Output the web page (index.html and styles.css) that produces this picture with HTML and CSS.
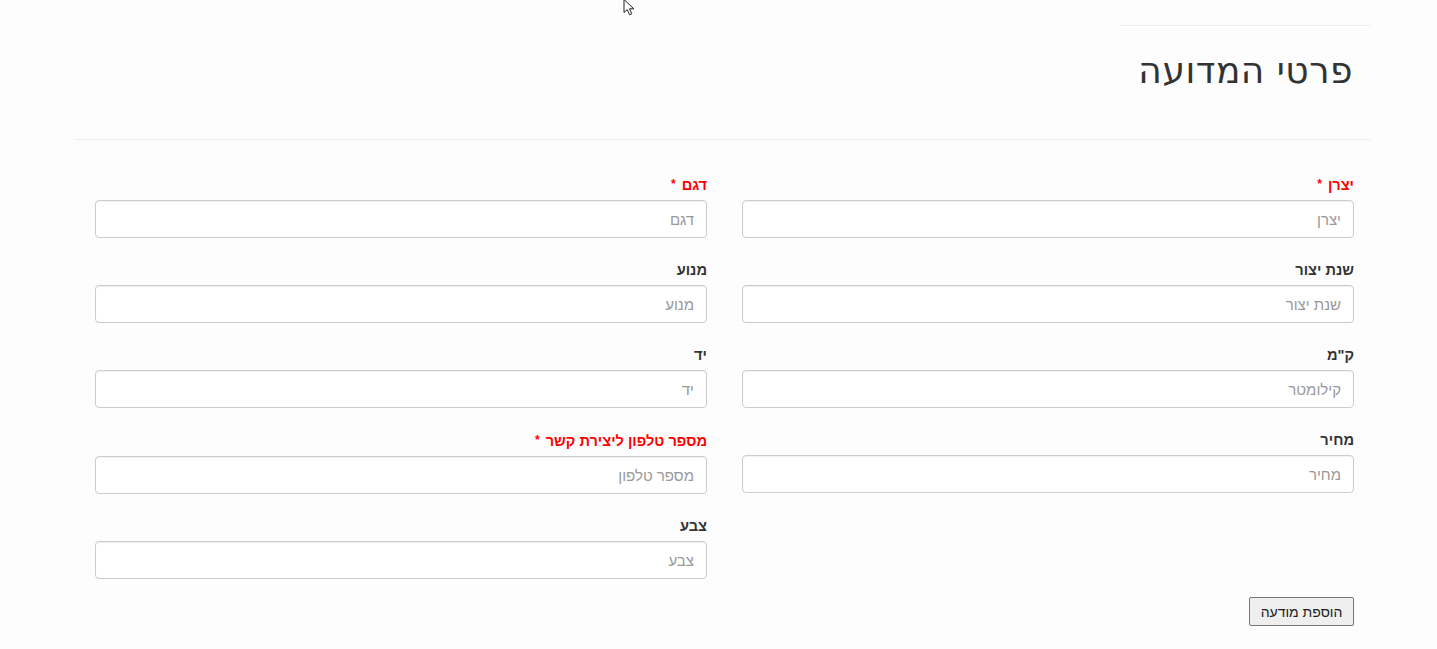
FILE: index.html
```html
<!DOCTYPE html>
<html lang="he" dir="rtl">
<head>
<meta charset="utf-8">
<title>פרטי המדועה</title>
<link rel="stylesheet" href="styles.css">
</head>
<body>
<div class="page">
  <div class="topline"></div>
  <h1 class="title">פרטי המדועה</h1>
  <div class="divider"></div>
  <form class="form">
    <div class="grid">
      <div class="group">
        <label class="label required">יצרן <span class="star">*</span></label>
        <input class="input" type="text" placeholder="יצרן">
      </div>
      <div class="group">
        <label class="label required">דגם <span class="star">*</span></label>
        <input class="input" type="text" placeholder="דגם">
      </div>
      <div class="group">
        <label class="label">שנת יצור</label>
        <input class="input" type="text" placeholder="שנת יצור">
      </div>
      <div class="group">
        <label class="label">מנוע</label>
        <input class="input" type="text" placeholder="מנוע">
      </div>
      <div class="group">
        <label class="label">ק"מ</label>
        <input class="input" type="text" placeholder="קילומטר">
      </div>
      <div class="group">
        <label class="label">יד</label>
        <input class="input" type="text" placeholder="יד">
      </div>
      <div class="group">
        <label class="label">מחיר</label>
        <input class="input" type="text" placeholder="מחיר">
      </div>
      <div class="group">
        <label class="label required">מספר טלפון ליצירת קשר <span class="star">*</span></label>
        <input class="input" type="text" placeholder="מספר טלפון">
      </div>
      <div class="group empty"></div>
      <div class="group">
        <label class="label">צבע</label>
        <input class="input" type="text" placeholder="צבע">
      </div>
    </div>
    <div class="actions">
      <button class="btn" type="button">הוספת מודעה</button>
    </div>
  </form>
</div>
<svg class="cursor" width="14" height="17" viewBox="0 0 14 17" aria-hidden="true">
  <path d="M1 0.5 L1 13.5 L4.2 10.6 L6.6 15.8 L8.8 14.8 L6.5 9.8 L10.8 9.8 Z" fill="#fff" stroke="#222" stroke-width="1" stroke-linejoin="round"/>
</svg>
</body>
</html>
```
FILE: styles.css
```css
html, body {
  margin: 0;
  padding: 0;
  background: #fdfdfe;
}
body {
  font-family: "Liberation Sans", Arial, "DejaVu Sans", sans-serif;
  font-size: 14px;
  color: #333;
  direction: rtl;
}
.page {
  width: 1296px;
  margin-right: 66px;
  padding-top: 25px;
}
.topline {
  width: 251px;
  border-top: 1px solid #eeeeef;
}
.title {
  margin: 22px 18px 0 0;
  font-family: "DejaVu Sans", "Liberation Sans", sans-serif;
  font-size: 36px;
  font-weight: normal;
  line-height: 45px;
  color: #333;
  letter-spacing: 0.5px;
}
.divider {
  margin-top: 46px;
  border-top: 1px solid #eeeeef;
}
.form {
  padding: 34px 17px 0 20px;
}
.grid {
  display: grid;
  grid-template-columns: 612px 612px;
  column-gap: 35px;
  row-gap: 22px;
}
.group {
  display: flex;
  flex-direction: column;
  min-height: 63px;
}
.label {
  display: block;
  font-weight: bold;
  font-size: 14.6px;
  line-height: 20px;
  margin-bottom: 5px;
  color: #333;
}
.label.required {
  color: #ff0000;
}
.star {
  font-size: 12px;
  vertical-align: 2px;
  margin-right: 2px;
}
.input {
  box-sizing: border-box;
  width: 612px;
  height: 38px;
  padding: 6px 12px;
  border: 1px solid #cccccc;
  border-radius: 4px;
  background: #fff;
  box-shadow: inset 0 1px 1px rgba(0,0,0,0.06);
  font-family: "Liberation Sans", Arial, sans-serif;
  font-size: 15px;
  color: #555;
  direction: rtl;
}
.input::placeholder {
  color: #999;
}
.actions {
  margin-top: 18px;
  display: flex;
}
.btn {
  box-sizing: border-box;
  width: 105px;
  height: 29px;
  padding: 0 6px;
  border: 1px solid #767676;
  border-radius: 2px;
  background: #efefef;
  font-family: "Liberation Sans", Arial, sans-serif;
  font-size: 14px;
  color: #222;
}
.cursor {
  position: absolute;
  left: 623px;
  top: -1px;
}
```
